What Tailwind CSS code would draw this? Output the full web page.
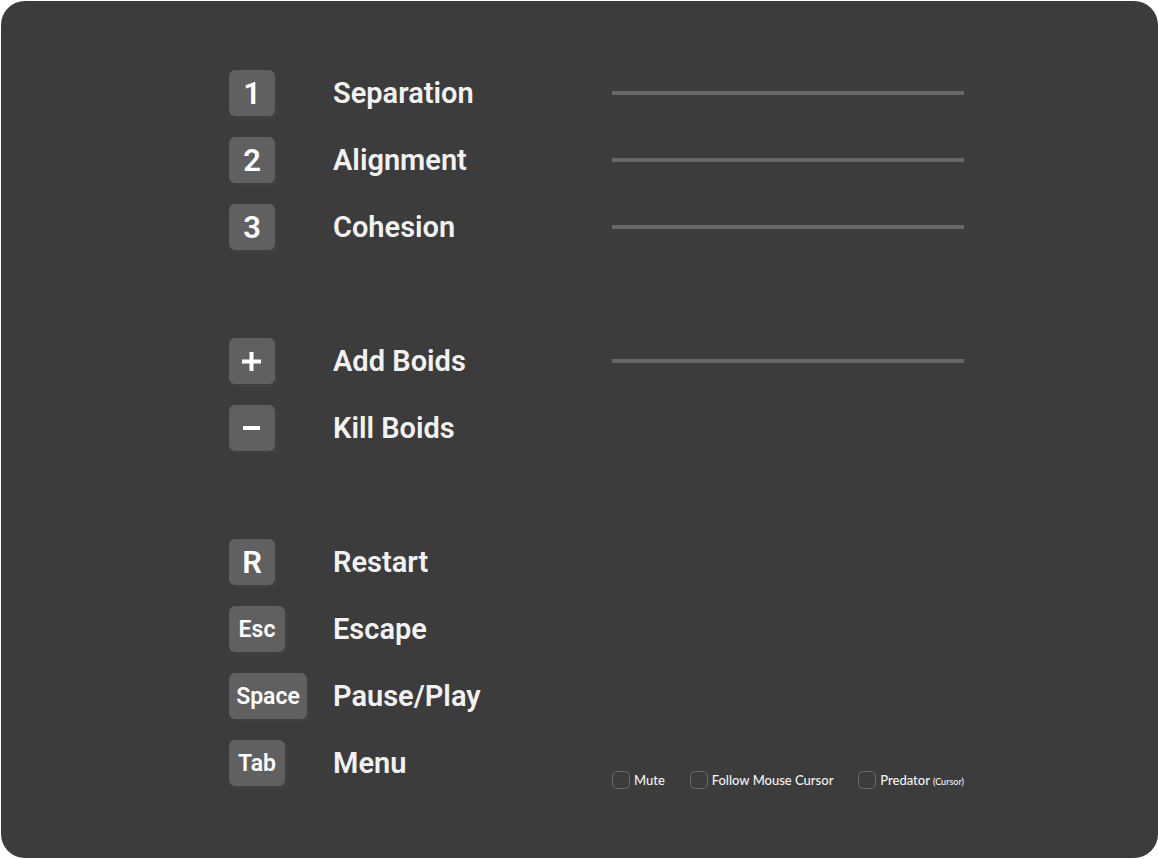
<!DOCTYPE html>
<html lang="en">
<head>
<meta charset="utf-8">
<meta name="viewport" content="width=device-width, initial-scale=1">
<title>Boids controls</title>
<script src="https://cdn.jsdelivr.net/npm/@tailwindcss/browser@4"></script>
</head>
<body class="bg-white font-[Roboto,sans-serif] font-semibold text-[#f2f2f2]">
<main class="ml-px mt-px flex min-h-[calc(100vh-2px)] flex-col gap-[88px] rounded-3xl bg-[#3c3c3c] pt-[69px] pr-[194px] pb-14 pl-[228px] text-[29px] leading-[46px]">
  <section class="flex flex-col gap-[21px]">
    <div class="grid grid-cols-[104px_279px_1fr] items-center">
      <button class="size-[46px] rounded-md bg-[#606060] text-[31px] leading-[48px] text-white shadow-[3px_3px_0_#404040]">1</button>
      <label for="separation">Separation</label>
      <input id="separation" type="range" class="h-1 w-full appearance-none bg-[#676767] [&::-webkit-slider-thumb]:appearance-none">
    </div>
    <div class="grid grid-cols-[104px_279px_1fr] items-center">
      <button class="size-[46px] rounded-md bg-[#606060] text-[31px] leading-[48px] text-white shadow-[3px_3px_0_#404040]">2</button>
      <label for="alignment">Alignment</label>
      <input id="alignment" type="range" class="h-1 w-full appearance-none bg-[#676767] [&::-webkit-slider-thumb]:appearance-none">
    </div>
    <div class="grid grid-cols-[104px_279px_1fr] items-center">
      <button class="size-[46px] rounded-md bg-[#606060] text-[31px] leading-[48px] text-white shadow-[3px_3px_0_#404040]">3</button>
      <label for="cohesion">Cohesion</label>
      <input id="cohesion" type="range" class="h-1 w-full appearance-none bg-[#676767] [&::-webkit-slider-thumb]:appearance-none">
    </div>
  </section>
  <section class="flex flex-col gap-[21px]">
    <div class="grid grid-cols-[104px_279px_1fr] items-center">
      <button aria-label="Plus" class="flex size-[46px] items-center justify-center rounded-md bg-[#606060] shadow-[3px_3px_0_#404040]">
        <svg class="size-[46px]" viewBox="0 0 46 46" fill="none" stroke="#fff" stroke-width="4"><path d="M13 23.5h19M22.5 14v19"/></svg>
      </button>
      <label for="boids">Add Boids</label>
      <input id="boids" type="range" class="h-1 w-full appearance-none bg-[#676767] [&::-webkit-slider-thumb]:appearance-none">
    </div>
    <div class="grid grid-cols-[104px_279px_1fr] items-center">
      <button aria-label="Minus" class="flex size-[46px] items-center justify-center rounded-md bg-[#606060] shadow-[3px_3px_0_#404040]">
        <svg class="size-[46px]" viewBox="0 0 46 46" fill="none" stroke="#fff" stroke-width="4"><path d="M14 23h17"/></svg>
      </button>
      <span>Kill Boids</span>
    </div>
  </section>
  <section class="flex flex-col gap-[21px]">
    <div class="grid grid-cols-[104px_279px_1fr] items-center">
      <button class="size-[46px] rounded-md bg-[#606060] text-[31px] leading-[48px] text-white shadow-[3px_3px_0_#404040]">R</button>
      <span>Restart</span>
    </div>
    <div class="grid grid-cols-[104px_279px_1fr] items-center">
      <button class="h-[46px] w-14 rounded-md bg-[#606060] text-[23px] leading-[48px] text-white shadow-[3px_3px_0_#404040]">Esc</button>
      <span>Escape</span>
    </div>
    <div class="grid grid-cols-[104px_279px_1fr] items-center">
      <button class="h-[46px] w-[78px] rounded-md bg-[#606060] text-[23px] leading-[48px] text-white shadow-[3px_3px_0_#404040]">Space</button>
      <span>Pause/Play</span>
    </div>
    <div class="grid grid-cols-[104px_279px_1fr] items-start">
      <button class="h-[46px] w-14 rounded-md bg-[#606060] text-[23px] leading-[48px] text-white shadow-[3px_3px_0_#404040]">Tab</button>
      <span>Menu</span>
      <div class="flex justify-between pt-[31px] font-[Lato,sans-serif] text-[13px] leading-[18px] font-medium whitespace-nowrap">
        <label class="flex items-center gap-1"><input type="checkbox" class="size-[18px] appearance-none rounded-[5px] border border-[#6a6a6a] checked:bg-[#6a6a6a]">Mute</label>
        <label class="flex items-center gap-1"><input type="checkbox" class="size-[18px] appearance-none rounded-[5px] border border-[#6a6a6a] checked:bg-[#6a6a6a]">Follow Mouse Cursor</label>
        <label class="flex items-center gap-1"><input type="checkbox" class="size-[18px] appearance-none rounded-[5px] border border-[#6a6a6a] checked:bg-[#6a6a6a]"><span>Predator <small class="text-[9px] leading-none">(Cursor)</small></span></label>
      </div>
    </div>
  </section>
</main>
</body>
</html>
